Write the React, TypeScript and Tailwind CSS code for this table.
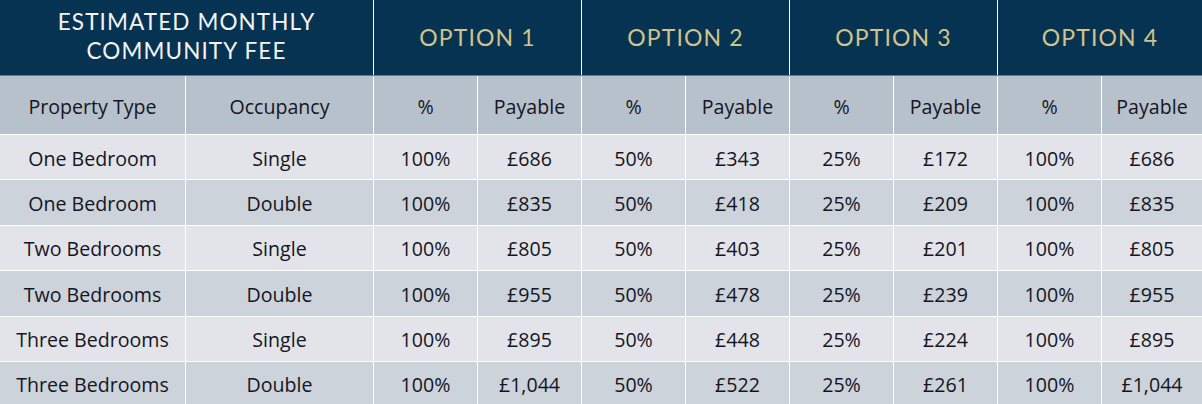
import React from 'react';

const rows = [
  ['One Bedroom', 'Single', '100%', '£686', '50%', '£343', '25%', '£172', '100%', '£686'],
  ['One Bedroom', 'Double', '100%', '£835', '50%', '£418', '25%', '£209', '100%', '£835'],
  ['Two Bedrooms', 'Single', '100%', '£805', '50%', '£403', '25%', '£201', '100%', '£805'],
  ['Two Bedrooms', 'Double', '100%', '£955', '50%', '£478', '25%', '£239', '100%', '£955'],
  ['Three Bedrooms', 'Single', '100%', '£895', '50%', '£448', '25%', '£224', '100%', '£895'],
  ['Three Bedrooms', 'Double', '100%', '£1,044', '50%', '£522', '25%', '£261', '100%', '£1,044'],
];

const subHeads = ['Property Type', 'Occupancy', '%', 'Payable', '%', 'Payable', '%', 'Payable', '%', 'Payable'];

// column widths incl. left border (first has none)
const widths = ['w-[185px]', 'w-[188px]', 'w-[104px]', 'w-[104px]', 'w-[104px]', 'w-[104px]', 'w-[104px]', 'w-[104px]', 'w-[104px]', 'flex-1'];

function App() {
  return (
    <div className="w-[1202px] h-[404px] overflow-hidden bg-white font-['Open_Sans',sans-serif] text-[19.6px] text-[#15151f]">
      {/* Title row */}
      <div className="flex h-[76px] bg-[#073352] border-b border-[#5f7a92]">
        <div className="w-[373px] flex flex-col items-center justify-center font-['Lato',sans-serif] text-[22.5px] leading-[29px] tracking-[0.05em] text-[#f4f4f4] pb-[3px]">
          <span>ESTIMATED MONTHLY</span>
          <span>COMMUNITY FEE</span>
        </div>
        {[1, 2, 3, 4].map((n) => (
          <div
            key={n}
            className={`${n === 4 ? 'flex-1' : 'w-[208px]'} border-l border-white flex items-center justify-center font-['Lato',sans-serif] text-[23px] tracking-[0.05em] text-[#d2c389] pb-[1px]`}
          >
            OPTION {n}
          </div>
        ))}
      </div>

      {/* Sub header */}
      <div className="flex h-[59px] bg-[#b7c1cc] border-b border-white">
        {subHeads.map((h, i) => (
          <div key={i} className={`${widths[i]} ${i > 0 ? 'border-l border-white' : ''} flex items-center justify-center pt-[3px]`}>
            {h}
          </div>
        ))}
      </div>

      {/* Data rows */}
      {rows.map((r, ri) => (
        <div key={ri} className={`flex h-[45.4px] border-b border-white ${ri % 2 === 0 ? 'bg-[#e3e4e9]' : 'bg-[#ccd3da]'}`}>
          {r.map((c, ci) => (
            <div key={ci} className={`${widths[ci]} ${ci > 0 ? 'border-l border-white' : ''} flex items-center justify-center pt-[2px]`}>
              {c}
            </div>
          ))}
        </div>
      ))}
    </div>
  );
}

export default App;
